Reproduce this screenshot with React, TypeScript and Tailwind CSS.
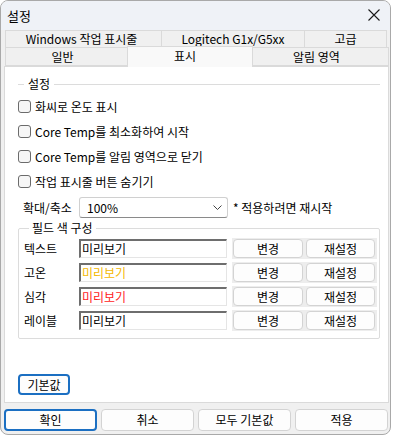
import { ReactNode } from 'react';

const font = { fontFamily: '"Noto Sans CJK KR", "Liberation Sans", sans-serif' };

function Btn({ children, width, primary }: { children: ReactNode; width: string; primary?: boolean }) {
  return (
    <button
      className={`${width} h-full rounded-[4px] bg-[#fdfdfd] text-[12px] text-black leading-none flex items-center justify-center ${
        primary ? 'border-2 border-[#1b6fc2]' : 'border border-[#d3d3d3]'
      }`}
    >
      {children}
    </button>
  );
}

function Check({ label }: { label: string }) {
  return (
    <div className="h-[25px] flex items-center gap-[4px]">
      <span className="w-[13px] h-[13px] rounded-[3px] border border-[#6b6b6b] bg-[#f6f6f6]" />
      <span className="text-[12px] text-black">{label}</span>
    </div>
  );
}

function ColorRow({ name, color }: { name: string; color: string }) {
  return (
    <div className="h-[24px] flex items-start">
      <div className="w-[55px] h-[19px] flex items-center text-[12px] text-black">{name}</div>
      <div
        className="w-[148px] h-[19px] bg-white border-t-2 border-l-2 border-t-[#6e6e6e] border-l-[#6e6e6e] border-b border-r border-b-[#e5e5e5] border-r-[#e5e5e5] flex items-center pl-[1px] text-[12px] leading-none"
        style={{ color }}
      >
        미리보기
      </div>
      <div className="ml-[5px] w-[145px] h-[21px] -mt-[1px] bg-[#ededed] flex items-center gap-[3px] px-[1px] py-[1px]">
        <Btn width="w-[70px]">변경</Btn>
        <Btn width="w-[69px]">재설정</Btn>
      </div>
    </div>
  );
}

export default function App() {
  const tab = 'h-full flex items-center justify-center border border-[#dadada] bg-[#f0f0f0] text-[12px] text-black leading-none';

  return (
    <div className="w-[395px] h-[435px] bg-white overflow-hidden" style={font}>
      <div className="w-[391px] h-[435px] rounded-[8px] border border-[#a9a9a9] bg-[#f0f0f0] flex flex-col overflow-hidden">
        {/* Title */}
        <div className="h-[29px] flex items-center justify-between pl-[6px] pr-[6px] bg-[#eff2f7]">
          <span className="text-[13px] text-black">설정</span>
          <svg width="12" height="12" viewBox="0 0 12 12" className="mr-[4px] mb-[2px]">
            <path d="M0.5 0.5 L11.5 11.5 M11.5 0.5 L0.5 11.5" stroke="#1a1a1a" strokeWidth="1.1" />
          </svg>
        </div>

        {/* Tabs */}
        <div className="pl-[4px] pr-[1px]">
          <div className="h-[18px] flex">
            <div className={`${tab} w-[157px] pr-[4px]`}>Windows 작업 표시줄</div>
            <div className={`${tab} w-[144px] -ml-px`}>Logitech G1x/G5xx</div>
            <div className={`${tab} w-[83px] -ml-px`}>고급</div>
          </div>
          <div className="h-[19px] flex items-end -mt-px">
            <div className={`${tab} w-[123px] !h-[19px] pr-[8px]`}>일반</div>
            <div className="w-[126px] h-[21px] -ml-px -mb-px z-10 border border-b-0 border-[#dadada] bg-[#f9f9f9] flex items-start justify-center pt-[3px] pr-[10px] text-[12px] leading-none text-black">
              표시
            </div>
            <div className={`${tab} w-[137px] !h-[19px] -ml-px pr-[8px]`}>알림 영역</div>
          </div>
        </div>

        {/* Panel */}
        <div className="ml-[3px] w-[385px] h-[337px] bg-white border border-[#dadada] pl-[13px] flex flex-col">
          <div className="mt-[10px] h-[14px] flex items-center pr-[8px]">
            <div className="w-[6px] h-px bg-[#dcdcdc]" />
            <span className="px-[4px] text-[12px] text-black leading-none">설정</span>
            <div className="flex-1 h-px bg-[#dcdcdc]" />
          </div>

          <div className="mt-[3px] flex flex-col">
            <Check label="화씨로 온도 표시" />
            <Check label="Core Temp를 최소화하여 시작" />
            <Check label="Core Temp를 알림 영역으로 닫기" />
            <Check label="작업 표시줄 버튼 숨기기" />
          </div>

          <div className="mt-[3px] h-[21px] flex items-center">
            <span className="w-[61px] pl-[5px] text-[12px] text-black">확대/축소</span>
            <div className="w-[149px] h-[21px] rounded-[3px] border border-[#d0d0d0] border-b-[#8a8a8a] bg-white flex items-center justify-between pl-[7px] pr-[5px]">
              <span className="text-[12px] text-black">100%</span>
              <svg width="9" height="5" viewBox="0 0 9 5">
                <path d="M0.5 0.5 L4.5 4.5 L8.5 0.5" stroke="#444" strokeWidth="1" fill="none" />
              </svg>
            </div>
            <span className="ml-[5px] text-[12px] text-black">* 적용하려면 재시작</span>
          </div>

          <fieldset className="mt-[3px] w-[362px] border border-[#dcdcdc] rounded-[2px] pl-[5px] pt-[4px] pb-[3px]">
            <legend className="ml-[5px] px-[3px] text-[12px] text-black leading-[14px]">필드 색 구성</legend>
            <ColorRow name="텍스트" color="#000000" />
            <ColorRow name="고온" color="#f5b800" />
            <ColorRow name="심각" color="#ff1a1a" />
            <ColorRow name="레이블" color="#000000" />
          </fieldset>

          <div className="mt-[35px] h-[21px]">
            <Btn width="w-[52px]" primary>
              기본값
            </Btn>
          </div>
        </div>

        {/* Bottom buttons */}
        <div className="mt-[6px] h-[22px] pl-[3px] flex gap-[4px]">
          <Btn width="w-[93px]" primary>
            확인
          </Btn>
          <Btn width="w-[93px]">취소</Btn>
          <Btn width="w-[93px]">모두 기본값</Btn>
          <Btn width="w-[93px]">적용</Btn>
        </div>
      </div>
    </div>
  );
}
